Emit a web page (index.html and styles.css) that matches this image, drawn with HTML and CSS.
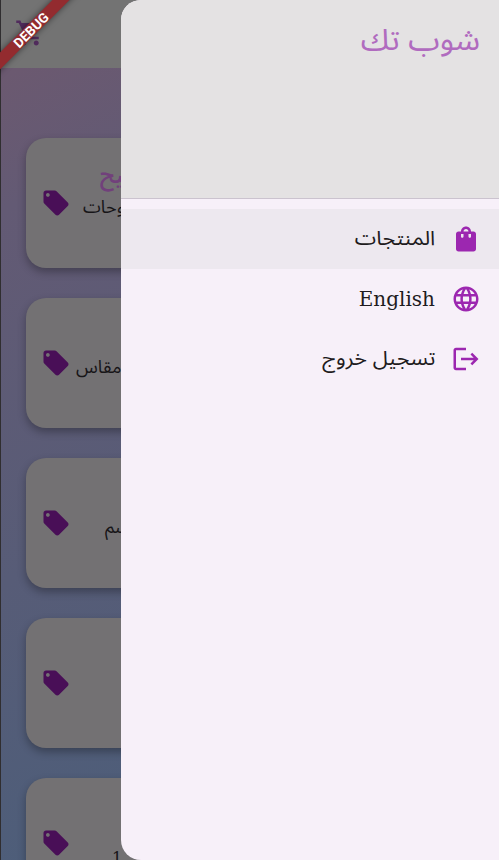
FILE: index.html
```html
<!DOCTYPE html>
<html lang="ar">
<head>
<meta charset="utf-8">
<title>شوب تك</title>
<link rel="stylesheet" href="styles.css">
</head>
<body>
<svg width="0" height="0" class="defs">
  <symbol id="tag" viewBox="0 0 24 24"><path fill-rule="evenodd" d="M21.41 11.58l-9-9C12.05 2.22 11.55 2 11 2H4c-1.1 0-2 .9-2 2v7c0 .55.22 1.05.59 1.42l9 9c.36.36.86.58 1.41.58s1.05-.22 1.41-.59l7-7c.37-.36.59-.86.59-1.41s-.23-1.06-.59-1.42zM5.500 7C4.670 7 4 6.330 4 5.500S4.670 4 5.500 4 7 4.670 7 5.500 6.330 7 5.500 7z"/></symbol>
</svg>
<div class="app">
  <div class="page">
    <header class="bar">
      <svg class="icon" viewBox="0 0 24 24"><path d="M15.550 13c.75 0 1.410-.41 1.750-1.030l3.580-6.490A.996.996 0 0 0 20.010 4H5.210l-.94-2H1v2h2l3.600 7.590-1.350 2.440C4.520 15.370 5.480 17 7 17h12v-2H7l1.100-2h7.450zM7 18c-1.100 0-1.990.9-1.990 2S5.900 22 7 22s2-.9 2-2-.9-2-2-2zm10 0c-1.100 0-1.990.9-1.990 2s.89 2 1.990 2 2-.9 2-2-.9-2-2-2z"/></svg>
    </header>
    <main class="list">
      <article class="card"><svg class="icon"><use href="#tag"/></svg><div class="info a"><b>ليح</b><span>وحات</span></div></article>
      <article class="card"><svg class="icon"><use href="#tag"/></svg><div class="info b"><span>مقاس</span></div></article>
      <article class="card"><svg class="icon"><use href="#tag"/></svg><div class="info c"><span>سم</span></div></article>
      <article class="card"><svg class="icon"><use href="#tag"/></svg></article>
      <article class="card"><svg class="icon"><use href="#tag"/></svg><div class="info d"><span>1</span></div></article>
    </main>
  </div>
  <div class="ribbon">DEBUG</div>
  <aside class="drawer" dir="rtl">
    <div class="head"><h1>شوب تك</h1></div>
    <nav>
      <a class="item active"><svg class="icon" viewBox="0 0 24 24"><path d="M18 6h-2c0-2.210-1.790-4-4-4S8 3.790 8 6H6c-1.100 0-2 .9-2 2v12c0 1.100.9 2 2 2h12c1.100 0 2-.9 2-2V8c0-1.100-.9-2-2-2zm-8 4c0 .55-.45 1-1 1s-1-.45-1-1V8h2v2zm2-6c1.100 0 2 .9 2 2h-4c0-1.100.9-2 2-2zm4 6c0 .55-.45 1-1 1s-1-.45-1-1V8h2v2z"/></svg><span class="wide">المنتجات</span></a>
      <a class="item"><svg class="icon" viewBox="0 0 24 24"><path d="M11.990 2C6.470 2 2 6.480 2 12s4.470 10 9.990 10C17.520 22 22 17.520 22 12S17.520 2 11.990 2zm6.930 6h-2.950c-.32-1.250-.78-2.450-1.380-3.560 1.840.63 3.370 1.910 4.330 3.560zM12 4.040c.83 1.200 1.480 2.530 1.910 3.960h-3.820c.43-1.430 1.080-2.760 1.910-3.960zM4.260 14C4.100 13.360 4 12.690 4 12s.1-1.360.26-2h3.380c-.08.66-.14 1.320-.14 2s.06 1.340.14 2H4.260zm.82 2h2.950c.32 1.250.78 2.450 1.380 3.560-1.840-.63-3.370-1.900-4.330-3.560zm2.950-8H5.080c.96-1.660 2.490-2.930 4.330-3.560C8.810 5.550 8.350 6.750 8.030 8zM12 19.960c-.83-1.200-1.480-2.530-1.910-3.960h3.820c-.43 1.430-1.080 2.760-1.910 3.960zM14.340 14H9.660c-.09-.66-.16-1.320-.16-2s.07-1.350.16-2h4.680c.09.65.16 1.320.16 2s-.07 1.340-.16 2zm.25 5.560c.6-1.110 1.060-2.310 1.380-3.560h2.950c-.96 1.650-2.490 2.930-4.330 3.560zM16.360 14c.08-.66.14-1.320.14-2s-.06-1.340-.14-2h3.380c.16.64.26 1.310.26 2s-.1 1.360-.26 2h-3.380z"/></svg><span class="en">English</span></a>
      <a class="item"><svg class="icon" viewBox="0 0 24 24"><path d="M17 7l-1.410 1.410L18.170 11H8v2h10.170l-2.580 2.580L17 17l5-5zM4 5h8V3H4c-1.100 0-2 .9-2 2v14c0 1.100.9 2 2 2h8v-2H4V5z"/></svg><span class="wide">تسجيل خروج</span></a>
    </nav>
  </aside>
</div>
</body>
</html>
```
FILE: styles.css
```css
* { box-sizing: border-box; }
body { margin: 0; font-family: "Noto Sans Arabic", "Noto Sans", "DejaVu Sans", sans-serif; }
.defs { position: absolute; }
.app { position: relative; width: 499px; height: 860px; overflow: hidden; background: #737174; }
.page { height: 860px; overflow: hidden; border-left: 1px solid #302e30; background: linear-gradient(155deg, #6b5970 70px, #635a74 190px, #4b5e7a 870px); }
.bar { height: 68px; padding: 18px 14px; background: #737373; }
.icon { display: block; flex: none; width: 30px; height: 30px; fill: #490f57; }
.bar .icon { fill: #512c5d; }
.list { display: flex; flex-direction: column; gap: 30px; padding: 70px 25px; }
.card { display: flex; flex: none; align-items: center; height: 130px; padding-left: 15px; border-radius: 20px; background: #737173; box-shadow: 0 4px 8px rgba(0,0,0,.3); }
.info { display: flex; flex-direction: column; align-items: flex-start; color: #171518; font-size: 18px; line-height: 28px; white-space: nowrap; direction: ltr; }
.info b { color: #71407b; font-size: 22px; line-height: 34px; margin-left: 17px; font-weight: 600; }
.a { padding-left: 12px; margin-top: -27px; }
.b { padding-left: 5px; margin-top: 7px; }
.c { padding-left: 34px; margin-top: 7px; }
.d { padding-left: 41px; margin-top: 32px; }
.d span { font-family: "DejaVu Serif", serif; font-size: 16px; }
.ribbon { position: absolute; left: -29px; top: 24px; width: 120px; height: 12px; transform: rotate(-45deg); background: #932b2f; color: #fff; font: 700 13.500px/13px Roboto, sans-serif; text-align: center; box-shadow: 0 0 6px rgba(0,0,0,.5); }
.drawer { position: absolute; top: 0; left: 121px; width: 378px; height: 860px; overflow: hidden; border-radius: 20px 0 0 20px; background: #f7f0f9; }
.head { height: 199px; padding: 15px 19px; border-bottom: 1px solid #cbc3cf; background: #e4e2e3; }
h1 { margin: 0; color: #b06bbf; font-size: 30px; line-height: 52px; font-weight: 400; transform: scaleX(1.065); transform-origin: right; }
nav { padding-top: 10px; }
.item { display: flex; align-items: center; gap: 16px; height: 60px; padding: 0 18px; color: #1e1b20; font-size: 20px; }
.active { background: #ede8ef; }
.item .icon { fill: #9c27b0; }
.wide { transform: scaleX(1.085); transform-origin: right; font-weight: 380; }
.en { direction: ltr; font-family: "Roboto Slab", "DejaVu Serif", serif; }
```
